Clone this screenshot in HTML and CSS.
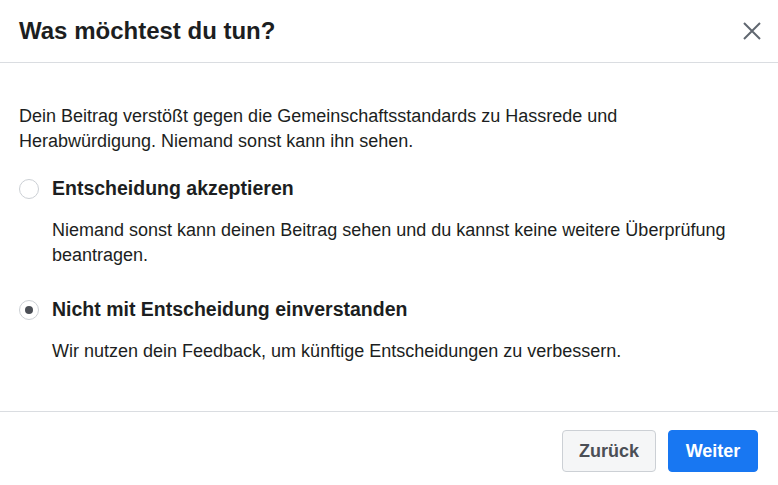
FILE: index.html
```html
<!DOCTYPE html>
<html lang="de">
<head>
  <meta charset="UTF-8" />
  <title>Was möchtest du tun?</title>
  <link rel="stylesheet" href="styles.css">
</head>
<body>
  <div class="dialog">
    <div class="header">
      <h2>Was möchtest du tun?</h2>
      <button class="close" aria-label="Schließen">
        <svg width="20" height="20" viewBox="0 0 20 20"><path d="M2 2L18 18M18 2L2 18" stroke="#606770" stroke-width="2" fill="none"/></svg>
      </button>
    </div>
    <div class="content">
      <p class="intro">Dein Beitrag verstößt gegen die Gemeinschaftsstandards zu Hassrede und Herabwürdigung. Niemand sonst kann ihn sehen.</p>
      <label class="option">
        <span class="radio"></span>
        <span class="option-text">
          <span class="option-title">Entscheidung akzeptieren</span>
          <span class="option-desc">Niemand sonst kann deinen Beitrag sehen und du kannst keine weitere Überprüfung beantragen.</span>
        </span>
      </label>
      <label class="option">
        <span class="radio checked"></span>
        <span class="option-text">
          <span class="option-title">Nicht mit Entscheidung einverstanden</span>
          <span class="option-desc">Wir nutzen dein Feedback, um künftige Entscheidungen zu verbessern.</span>
        </span>
      </label>
    </div>
    <div class="footer">
      <button class="btn btn-secondary">Zurück</button>
      <button class="btn btn-primary">Weiter</button>
    </div>
  </div>
</body>
</html>
```
FILE: styles.css
```css
body {
  margin: 0;
  font-family: "Liberation Sans", Arial, sans-serif;
  color: #1c1e21;
  background: #fff;
}
.dialog {
  width: 778px;
}
.header {
  display: flex;
  justify-content: space-between;
  align-items: center;
  height: 62px;
  padding: 0 16px 0 19px;
  border-bottom: 1px solid #dadde1;
}
.header h2 {
  margin: 0;
  font-size: 24px;
  line-height: 28px;
  font-weight: bold;
}
.close {
  border: none;
  background: none;
  padding: 0;
  width: 20px;
  height: 20px;
  cursor: pointer;
}
.content {
  padding: 41px 19px 47px;
  font-size: 18px;
  line-height: 25px;
}
.intro {
  margin: 0 0 22px;
  max-width: 620px;
}
.option {
  display: flex;
  gap: 13px;
  margin-bottom: 29px;
}
.option:last-child {
  margin-bottom: 0;
}
.radio {
  flex: none;
  width: 18px;
  height: 18px;
  margin-top: 3px;
  border: 1px solid #ccd0d5;
  border-radius: 50%;
  display: flex;
  align-items: center;
  justify-content: center;
}
.radio.checked::after {
  content: "";
  width: 8px;
  height: 8px;
  border-radius: 50%;
  background: #4b4f56;
}
.option-text {
  display: flex;
  flex-direction: column;
  gap: 17px;
}
.option-title {
  font-size: 19.5px;
  font-weight: bold;
}
.footer {
  display: flex;
  justify-content: flex-end;
  gap: 12px;
  border-top: 1px solid #dadde1;
  padding: 18px 20px;
}
.btn {
  font-family: inherit;
  font-size: 18px;
  font-weight: bold;
  height: 42px;
  border-radius: 4px;
  cursor: pointer;
}
.btn-secondary {
  width: 94px;
  background: #f5f6f7;
  border: 1px solid #ccd0d5;
  color: #4b4f56;
}
.btn-primary {
  width: 90px;
  background: #1877f2;
  border: 1px solid #1877f2;
  color: #fff;
}
```
